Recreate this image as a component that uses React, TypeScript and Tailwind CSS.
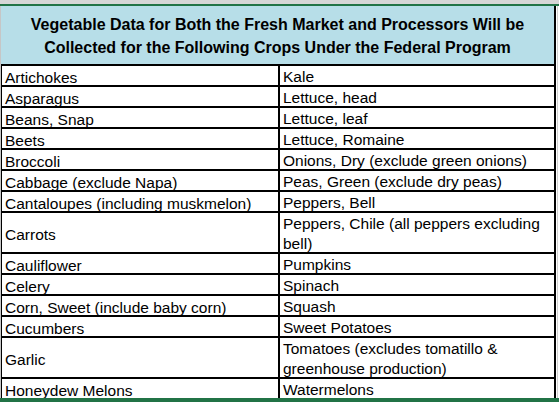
const rows: { left: string; right: string; tall?: boolean }[] = [
  { left: "Artichokes", right: "Kale" },
  { left: "Asparagus", right: "Lettuce, head" },
  { left: "Beans, Snap", right: "Lettuce, leaf" },
  { left: "Beets", right: "Lettuce, Romaine" },
  { left: "Broccoli", right: "Onions, Dry (exclude green onions)" },
  { left: "Cabbage (exclude Napa)", right: "Peas, Green (exclude dry peas)" },
  { left: "Cantaloupes (including muskmelon)", right: "Peppers, Bell" },
  { left: "Carrots", right: "Peppers, Chile (all peppers excluding bell)", tall: true },
  { left: "Cauliflower", right: "Pumpkins" },
  { left: "Celery", right: "Spinach" },
  { left: "Corn, Sweet (include baby corn)", right: "Squash" },
  { left: "Cucumbers", right: "Sweet Potatoes" },
  { left: "Garlic", right: "Tomatoes (excludes tomatillo & greenhouse production)", tall: true },
  { left: "Honeydew Melons", right: "Watermelons" },
];

export default function App() {
  return (
    <div className="w-[559px] h-[402px] overflow-hidden bg-white flex flex-col font-['Liberation_Sans',Arial,sans-serif] text-black">
      <div className="h-[4px] bg-[#d6d6d6]" />
      <div className="h-[2px] bg-[#217346]" />

      <div className="flex flex-1 min-h-0">
        <div className="w-[1px] bg-[#c6c6c6]" />

        <div className="w-[555px] flex flex-col">
          {/* Title */}
          <div className="h-[58px] bg-[#b7dee8] border-r-2 border-black flex items-center justify-center text-center text-[16px] font-bold leading-[23px] pt-[1px]">
            <p>
              Vegetable Data for Both the Fresh Market and Processors Will be
              <br />
              Collected for the Following Crops Under the Federal Program
            </p>
          </div>

          {/* Crop list */}
          <div className="border-l border-r-2 border-black text-[15.5px]">
            {rows.map((row) => (
              <div
                key={row.left}
                className={`grid grid-cols-[278px_1fr] border-t-2 border-black ${row.tall ? "h-[41px]" : "h-[21px]"}`}
              >
                <div className="border-r-2 border-black pl-[3px] pt-[1px] flex items-center leading-[19px]">
                  {row.left}
                </div>
                <div className="pl-[3px] pr-[4px] pt-[1px] flex items-center leading-[20px]">
                  {row.right}
                </div>
              </div>
            ))}
          </div>
        </div>

        <div className="flex-1 flex">
          <div className="w-[1px] bg-white" />
          <div className="w-[1px] bg-[#d0d0d0]" />
          <div className="flex-1 bg-white" />
        </div>
      </div>

      <div className="h-[4px] bg-[#217346]" />
    </div>
  );
}
